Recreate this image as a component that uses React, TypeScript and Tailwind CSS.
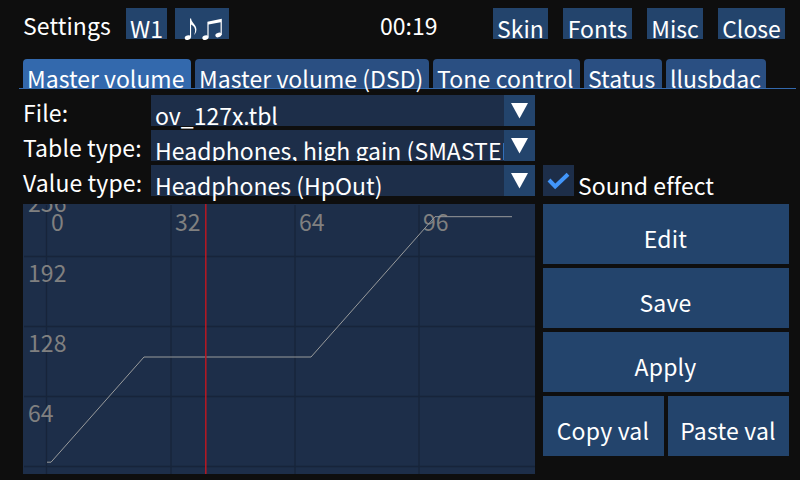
import type { ReactNode } from "react";

const FONT = "font-['Noto_Sans_CJK_JP','Noto_Sans',sans-serif]";

function HeaderButton({ width, children }: { width: string; children: ReactNode }) {
  return (
    <button className={`${width} h-[31px] shrink-0 bg-[#23446c] text-center leading-[40px] whitespace-nowrap`}>
      {children}
    </button>
  );
}

function MusicNotes() {
  return (
    <svg width="54" height="34" viewBox="0 0 54 34" className="block" fill="#fff">
      <ellipse cx="12.8" cy="29.7" rx="3.1" ry="2.2" transform="rotate(-18 12.8 29.7)" />
      <path d="M15 10.5H16.1C16.3 14.5 21.4 16.6 21.4 21.4C21.4 23.8 20.3 25.8 19.1 27.1C19.9 25 20.3 23.2 20 21.3C19.6 18.8 17.6 17.2 16.1 16.6V29.5H15Z" />
      <ellipse cx="30.4" cy="29.7" rx="3.1" ry="2.2" transform="rotate(-18 30.4 29.7)" />
      <ellipse cx="43.4" cy="27" rx="3.1" ry="2.2" transform="rotate(-18 43.4 27)" />
      <path d="M32.4 13.7L46.8 10.8V27H45.6V14.2L33.6 16.6V29.5H32.4Z" />
    </svg>
  );
}

function Tab({ width, active = false, children }: { width: string; active?: boolean; children: ReactNode }) {
  return (
    <button
      className={`${width} h-[29px] shrink-0 rounded-t-[4px] pl-1 text-left leading-[38px] whitespace-nowrap ${
        active ? "bg-[#3369ad]" : "bg-[#2a4f82]"
      }`}
    >
      {children}
    </button>
  );
}

function Combo({ label, value, clip = false }: { label: string; value: string; clip?: boolean }) {
  return (
    <div className="flex h-[31px]">
      <span className="w-32 shrink-0 leading-[34px] tracking-[0.1px] whitespace-nowrap">{label}</span>
      <div className="flex w-96 bg-[#1d2e49]">
        <span
          className={`w-[353px] shrink-0 pl-1 leading-[40px] whitespace-nowrap ${
            clip ? "overflow-hidden tracking-[0.03px]" : ""
          }`}
        >
          {value}
        </span>
        <span className="h-[31px] w-[31px] bg-[#23446c]">
          <svg width="31" height="31" viewBox="0 0 31 31">
            <path d="M7 8H24L15.5 23.5Z" fill="#fff" />
          </svg>
        </span>
      </div>
    </div>
  );
}

function ActionButton({ children }: { children: ReactNode }) {
  return (
    <button className="h-[60px] flex-1 bg-[#23446c] text-center leading-[68px] tracking-[0.2px] whitespace-nowrap">
      <span className="-ml-px">{children}</span>
    </button>
  );
}

function Chart() {
  const columns = [23.5, 148, 272, 396];
  const rows = [52.5, 122.5, 192.5, 262.5];
  return (
    <svg width="512" height="270" viewBox="0 0 512 270" className="block bg-[#1d2e49]">
      <g stroke="#17243a" strokeWidth="1.3">
        {columns.map((x) => (
          <line key={x} x1={x} x2={x} y1="1" y2="270" />
        ))}
        {rows.map((y) => (
          <line key={y} x1="1" x2="512" y1={y} y2={y} />
        ))}
      </g>
      <g fill="#808080" fontSize="23" letterSpacing="0.1">
        <text x="5" y="8">256</text>
        <text x="5" y="78">192</text>
        <text x="5" y="148">128</text>
        <text x="5" y="218">64</text>
        <text x="28" y="27">0</text>
        <text x="152" y="27">32</text>
        <text x="276" y="27">64</text>
        <text x="400" y="27">96</text>
      </g>
      <path d="M24 258.2H28L121 153H288L412 12.7H489" fill="none" stroke="#999b9c" strokeWidth="1" />
      <line x1="182.8" x2="182.8" y1="0" y2="270" stroke="#b81822" strokeWidth="1.5" />
    </svg>
  );
}

export default function App() {
  return (
    <div className={`${FONT} h-[480px] w-[800px] overflow-hidden bg-[#0e0e0e] pt-2 text-[23px] text-white`}>
      <header className="flex h-[31px] pl-[23px]">
        <span className="w-[103px] leading-[34px] tracking-[0.1px]">Settings</span>
        <HeaderButton width="w-[41px]">W1</HeaderButton>
        <span className="w-2" />
        <HeaderButton width="w-[54px]">
          <MusicNotes />
        </HeaderButton>
        <span className="ml-[151px] w-[113px] leading-[34px]">00:19</span>
        <div className="flex gap-[15px]">
          <HeaderButton width="w-[55px]">Skin</HeaderButton>
          <HeaderButton width="w-[69px]">Fonts</HeaderButton>
          <HeaderButton width="w-[56px]">Misc</HeaderButton>
          <HeaderButton width="w-[67px]">Close</HeaderButton>
        </div>
      </header>

      <nav className="relative mt-5 mr-1 ml-[19px] h-[30px] pl-1">
        <div className="flex h-[29px] gap-1">
          <Tab width="w-[168px]" active>Master volume</Tab>
          <Tab width="w-[234px] tracking-[0.05px]">Master volume (DSD)</Tab>
          <Tab width="w-[147px] tracking-[0.15px]">Tone control</Tab>
          <Tab width="w-[78px]">Status</Tab>
          <Tab width="w-[100px]">llusbdac</Tab>
        </div>
        <div className="-mx-1 h-px bg-[#3369ad] [margin-right:0]" />
      </nav>

      <main className="mt-[6px] flex gap-2 pl-[23px]">
        <section className="w-[512px] shrink-0">
          <div className="flex flex-col gap-1">
            <Combo label="File:" value="ov_127x.tbl" />
            <Combo label="Table type:" value="Headphones, high gain (SMASTER)" clip />
            <Combo label="Value type:" value="Headphones (HpOut)" />
          </div>
          <div className="mt-2">
            <Chart />
          </div>
        </section>

        <section className="w-[246px] shrink-0 pt-[70px]">
          <label className="flex h-[31px]">
            <span className="h-[31px] w-[31px] bg-[#1d2e49]">
              <svg width="31" height="31" viewBox="0 0 31 31">
                <path d="M6 15L12.2 21.5L25 9.3" fill="none" stroke="#4296fa" strokeWidth="4" />
              </svg>
            </span>
            <span className="ml-1 leading-[40px] tracking-[0.05px] whitespace-nowrap">Sound effect</span>
          </label>
          <div className="mt-2 flex flex-col gap-1">
            <div className="flex"><ActionButton>Edit</ActionButton></div>
            <div className="flex"><ActionButton>Save</ActionButton></div>
            <div className="flex"><ActionButton>Apply</ActionButton></div>
            <div className="flex gap-1">
              <ActionButton>Copy val</ActionButton>
              <ActionButton>Paste val</ActionButton>
            </div>
          </div>
        </section>
      </main>
    </div>
  );
}
